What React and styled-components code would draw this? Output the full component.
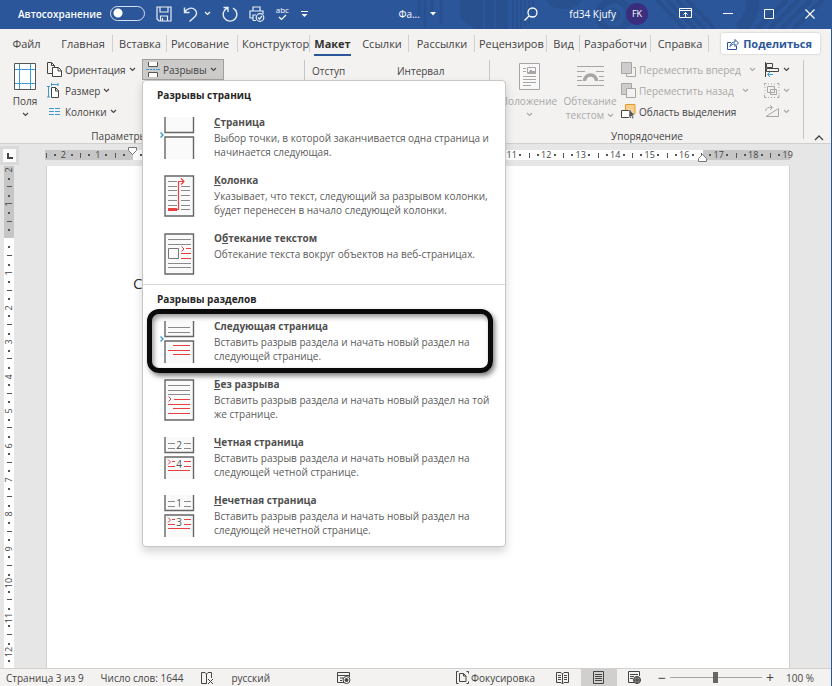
import React from "react";
import styled, { createGlobalStyle, css } from "styled-components";

const BLUE = "#2b579a";
const INK = "#444";
const FAINT = "#aaa8a6";
const RED = "#e84040";
const SKY = "#3c9bd6";

const GlobalStyle = createGlobalStyle`
  *, *::before, *::after { box-sizing: border-box; }
  html, body { margin: 0; }
  body {
    font-family: "Open Sans", "Noto Sans", sans-serif;
    font-size: 10px;
    line-height: 14px;
    color: ${INK};
    background: #e6e6e6;
  }
  button, input { font: inherit; color: inherit; }
  button { margin: 0; padding: 0; border: 0; background: none; cursor: pointer; white-space: nowrap; }
  svg { display: block; flex: none; }
`;

const Window = styled.div`
  height: 100vh;
  display: flex;
  flex-direction: column;
  border-right: 1px solid ${BLUE};
  overflow: hidden;
`;

/* ---------- title bar ---------- */
const TitleBar = styled.header`
  position: relative;
  flex: none;
  display: flex;
  align-items: center;
  justify-content: space-between;
  height: 29px;
  padding: 0 16px 2px 18px;
  background: ${BLUE};
  color: #fff;
`;
const TitlePattern = styled.svg`
  position: absolute;
  top: 0;
  right: 0;
  pointer-events: none;
`;
const TitleGroup = styled.div`
  position: relative;
  display: flex;
  align-items: center;
  gap: ${(p) => p.$gap}px;
`;
const AutoSave = styled.label`
  display: flex;
  align-items: center;
  gap: 8px;
  font-weight: 600;
`;
const Toggle = styled.input`
  appearance: none;
  width: 35px;
  height: 15px;
  margin: 0;
  border: 1px solid #d5deeb;
  border-radius: 8px;
  background: radial-gradient(circle at 7px 6px, #fff 4px, transparent 5px);
`;
const TitleButton = styled.button`
  display: flex;
  align-items: center;
  gap: ${(p) => p.$gap || 6}px;
`;
const SpellButton = styled.button`
  display: flex;
  flex-direction: column;
  align-items: center;
  font-size: 8px;
  line-height: 8px;
`;
const Avatar = styled.span`
  display: grid;
  place-items: center;
  width: 22px;
  height: 22px;
  border-radius: 50%;
  background: #3b2e7e;
  font-size: 9px;
`;

/* ---------- tabs ---------- */
const TabBar = styled.nav`
  flex: none;
  display: flex;
  align-items: center;
  height: 29px;
  padding-right: 11px;
  background: #f3f2f1;
`;
const Tab = styled.button`
  flex: 0 1 ${(p) => p.$w}px;
  min-width: 0;
  height: 17px;
  padding: 0 3px 0 4px;
  overflow: hidden;
  font-size: 11px;
  line-height: 16px;
  text-align: ${(p) => (p.$clip ? "left" : "center")};
  border-right: 1px solid ${(p) => (p.$open ? "transparent" : "#d2d0ce")};
  ${(p) =>
    p.$active &&
    css`
      height: 21px;
      margin-top: 4px;
      font-weight: 700;
      color: #333;
      border-right-color: transparent;
      span {
        display: block;
        height: 20px;
        border-bottom: 2px solid ${BLUE};
      }
    `}
`;
const ShareButton = styled.button`
  display: flex;
  align-items: center;
  gap: 4px;
  height: 21px;
  margin-left: auto;
  padding: 0 8px 0 6px;
  border-radius: 2px;
  background: #fff;
  box-shadow: 0 0 2px rgba(0, 0, 0, 0.25);
  color: ${BLUE};
  font-size: 11px;
  font-weight: 700;
`;

/* ---------- ribbon ---------- */
const Ribbon = styled.section`
  position: relative;
  z-index: 2;
  flex: none;
  display: flex;
  height: 86px;
  background: #f3f2f1;
  border-bottom: 1px solid #d2d0ce;
`;
const Group = styled.div`
  flex: ${(p) => p.$grow || 0} 0 ${(p) => p.$w}px;
  position: relative;
  display: flex;
  flex-direction: column;
  &::after {
    content: "";
    position: absolute;
    right: 0;
    top: 2px;
    bottom: 4px;
    border-right: 1px solid #c8c6c4;
  }
`;
const GroupBody = styled.div`
  flex: 1;
  min-height: 0;
  display: flex;
  align-items: flex-start;
  gap: ${(p) => p.$gap || 0}px;
  padding-left: ${(p) => p.$inset || 0}px;
`;
const GroupLabel = styled.div`
  height: 14px;
  padding-right: ${(p) => p.$inset || 0}px;
  text-align: center;
`;
const Stack = styled.div`
  flex: 0 0 ${(p) => p.$w}px;
  display: flex;
  flex-direction: column;
  align-items: flex-start;
  padding-top: 1px;
`;
const RibbonButton = styled.button`
  display: flex;
  align-items: center;
  gap: ${(p) => p.$gap || 3}px;
  height: 21px;
  color: ${(p) => (p.disabled ? FAINT : INK)};
`;
const TallButton = styled.button`
  flex: 0 0 ${(p) => p.$w}px;
  display: flex;
  flex-direction: column;
  align-items: center;
  padding: 5px 0 0 ${(p) => p.$inset || 0}px;
  color: ${(p) => (p.disabled ? FAINT : INK)};
  span { display: flex; align-items: center; gap: 3px; }
  svg + span { margin-top: 4px; }
  > span + svg { margin-top: 4px; }
`;
const FieldTitles = styled.div`
  display: grid;
  grid-template-columns: 85px 1fr;
  padding: 6px 7px;
`;
const MenuAnchor = styled.div`
  position: relative;
  z-index: 1;
  margin-top: 1px;
`;
const BreaksButton = styled(RibbonButton)`
  width: 82px;
  padding-left: 3px;
  border: 1px solid #a19f9d;
  background: #cdcbc9;
`;
const CollapseButton = styled.button`
  display: flex;
  flex: 0 0 27px;
  align-items: flex-end;
  justify-content: center;
  padding: 0 0 2px 2px;
`;

/* ---------- breaks menu ---------- */
const Menu = styled.div`
  position: absolute;
  top: 100%;
  left: 0;
  width: 364px;
  height: 467px;
  border: 1px solid #c8c6c4;
  border-radius: 4px;
  background: #fff;
  box-shadow: 0 5px 10px rgba(0, 0, 0, 0.16);
`;
const MenuHeading = styled.h2`
  margin: 0;
  padding: 7px 14px 0;
  height: 33px;
  font-size: 10px;
  line-height: 14px;
  font-weight: 700;
  color: #262626;
`;
const MenuItem = styled.button`
  position: relative;
  display: grid;
  grid-template-columns: 42px 1fr;
  gap: 19px;
  align-items: start;
  width: 100%;
  height: 58px;
  padding: 0 2px 0 10px;
  text-align: left;
  color: #5c5c5c;
  svg { margin-top: 3px; }
`;
const MenuSection = styled.div`
  & + & {
    border-top: 1px solid #dcdad8;
  }
  &:first-child ${MenuItem}:last-child { height: 54px; }
`;
const MenuText = styled.span`
  white-space: normal;
`;
const ItemTitle = styled.strong`
  display: block;
  height: 17px;
  line-height: 16px;
  color: #505050;
`;
const Highlight = styled.span`
  position: absolute;
  top: -9px;
  left: 4px;
  right: 12px;
  height: 64px;
  border: 5px solid #0a0a0a;
  border-radius: 12px;
  box-shadow: 2px 3px 5px rgba(0, 0, 0, 0.5), inset 2px 3px 5px rgba(0, 0, 0, 0.4);
`;

/* ---------- document ---------- */
const Workspace = styled.main`
  flex: 1;
  min-height: 0;
  display: grid;
  grid-template-columns: 45px 1fr 41px;
  grid-template-rows: 22px 1fr;
`;
const Corner = styled.div`
  display: grid;
  place-items: center;
  width: 19px;
  height: 19px;
  margin: 2px 0;
  background: #fbfbfb;
  border: 3px solid #dadada;
`;
const RulerX = styled.div`
  position: relative;
  display: flex;
  align-items: center;
  justify-content: space-between;
  height: 10px;
  margin-top: 6px;
  padding: 0 2px 0 1px;
  font-size: 9px;
  background: linear-gradient(90deg, #c6c6c6 11.8%, #fff 11.8% 88.3%, #c6c6c6 88.3%);
`;
const RulerY = styled.div`
  display: flex;
  flex-direction: column;
  align-items: center;
  justify-content: space-between;
  width: 10px;
  margin-left: 4px;
  padding: 4px 0 7px;
  font-size: 9px;
  background: linear-gradient(#c6c6c6 14.4%, #fff 14.4%);
`;
const Mark = styled.span`
  display: flex;
  flex: none;
  align-items: center;
  justify-content: center;
  width: 0;
  height: 0;
  transform: ${(p) => (p.$turned ? "rotate(-90deg)" : "none")};
  i {
    flex: none;
    width: ${(p) => (p.$kind === "dot" ? 2 : 1)}px;
    height: ${(p) => (p.$kind === "dot" ? 2 : 5)}px;
    background: #555;
  }
`;
const IndentMarker = styled.svg`
  position: absolute;
  left: ${(p) => p.$left};
  top: ${(p) => p.$top}px;
  margin-left: -5px;
`;
const Page = styled.article`
  margin-left: 1px;
  padding: 107px 86px;
  border: solid #d0d0d0;
  border-width: 0 1px;
  background: #fff;
  font-size: 15px;
  line-height: 20px;
  color: #333;
  p { margin: 0; }
`;

/* ---------- status bar ---------- */
const StatusBar = styled.footer`
  flex: none;
  display: flex;
  align-items: stretch;
  justify-content: space-between;
  height: 18px;
  padding: 0 17px 0 6px;
  background: #f3f2f1;
  border-top: 1px solid #d2d0ce;
`;
const StatusGroup = styled.div`
  display: flex;
  align-items: center;
  gap: ${(p) => p.$gap}px;
`;
const MacroButton = styled.button`
  margin-left: 50px;
`;
const ViewButton = styled.button`
  display: grid;
  place-items: center;
  width: 36px;
  height: 17px;
  background: ${(p) => (p.$on ? "#d0cfcd" : "none")};
`;
const FocusButton = styled.button`
  display: flex;
  align-items: center;
  gap: 2px;
  margin-right: 10px;
`;
const ZoomGroup = styled.div`
  display: flex;
  align-items: center;
  gap: 4px;
  margin-left: 5px;
`;
const ZoomButton = styled.button`
  width: 8px;
  font-size: 14px;
`;
const ZoomSlider = styled.input`
  appearance: none;
  width: 92px;
  height: 12px;
  margin: 0;
  background: linear-gradient(#a8a6a4, #a8a6a4) center / 100% 1px no-repeat;
  &::-webkit-slider-thumb {
    appearance: none;
    width: 5px;
    height: 11px;
    background: #666;
  }
`;
const ZoomValue = styled.span`
  margin-left: 8px;
  white-space: nowrap;
`;

/* ---------- icons ---------- */
const Icon = ({ w = 16, h = 16, c = "currentColor", sw = 1, children }) => (
  <svg width={w} height={h} viewBox={`0 0 ${w} ${h}`} fill="none" stroke={c} strokeWidth={sw} aria-hidden="true">
    {children}
  </svg>
);
const Chevron = () => (
  <Icon w={7} h={5} sw={1.1}><path d="M1 1l2.500 2.500L6 1" /></Icon>
);

const SaveIcon = () => (
  <Icon w={16} h={16} c="#e6edf6" sw={1.2}>
    <path d="M1 1h14v14H3l-2-2zM4 1v5h8V1M4.500 15v-5h7v5M6.500 15v-3" />
  </Icon>
);
const UndoIcon = () => (
  <Icon w={15} h={16} sw={1.4} c="#e6edf6">
    <path d="M1.500 1.500v5h5M1.500 6.500C4 2 9 .8 12 3.800s1 6-1 7.700L6.500 15.500" />
  </Icon>
);
const RedoIcon = () => (
  <Icon w={16} h={16} sw={1.4} c="#e6edf6">
    <path d="M1.500 1.500h4.500v4.500M5.500 2A6.800 6.800 0 1 0 11 2.200" />
  </Icon>
);
const PrintIcon = () => (
  <Icon w={16} h={16} sw={1.2} c="#e6edf6">
    <path d="M4 5V1h7v4M4 12H1V5h13v3M4 14.500V9h3M4 14.500h3" />
    <circle cx="11" cy="11.500" r="3.800" />
    <path d="M9 11.500l1.500 1.500 2.500-3" />
  </Icon>
);
const PatternArt = () => (
  <TitlePattern width="420" height="29" viewBox="0 0 420 29" fill="none" stroke="#28508e" aria-hidden="true">
    <path d="M8 0v17M14 0v27M21 0v17M30 0v24" strokeWidth="3" />
    <path d="M49 0h23v29h-8l-15-11zM74 0h9v29h-9zM85 0h12v29H85z" fill="#28508e" stroke="none" />
    <path d="M102 0v29M106 0v29M110 0v29M114 0v27M118 0v24M122 0v18" strokeWidth="2" />
    <path d="M136 0c2 12 32 12 34 0z" fill="#28508e" stroke="none" />
    <circle cx="203" cy="15" r="15" strokeWidth="7" />
    <circle cx="203" cy="15" r="5" strokeWidth="3" />
    <path d="M246 0l28 29M256 0l28 29M266 0l28 29M276 0l28 29" strokeWidth="4" />
    <path d="M342 0c0 14-6 23-14 29" strokeWidth="13" />
    <path d="M346 29l30-29M358 29l30-29M370 29l30-29M382 29l30-29" strokeWidth="5" />
  </TitlePattern>
);
const MarginsIcon = () => (
  <Icon w={22} h={27}>
    <path d="M.5.500h21v26H.5z" fill="#fff" stroke="#555" />
    <path d="M5.500 1v25M16.500 1v25M1 6.500h20M1 20.500h20" stroke={SKY} />
  </Icon>
);
const OrientationIcon = () => (
  <Icon w={15} h={15}>
    <path d="M5 11.500H.5v-11h4l3 3V6M4.500.500v3h3" />
    <path d="M5.500 5.500h6l3 3v6h-9zM11 5.500v3.500h3.500" fill="#fff" />
  </Icon>
);
const SizeIcon = () => (
  <Icon w={15} h={15}>
    <path d="M1.500 3v11M0 3.500h3M0 14h3M4 1.500h7M4.500 0v3M11 0v3" stroke={SKY} />
    <path d="M4.500 4.500h4l3 3v7h-7zM8.500 4.500v3.500h3" fill="#fff" />
  </Icon>
);
const ColumnsIcon = () => (
  <Icon w={15} h={12} c={SKY}>
    <path d="M2 2.500h5M2 5.500h5M2 8.500h5M8 2.500h5M8 5.500h5M8 8.500h5" />
  </Icon>
);
const BreaksIcon = () => (
  <Icon w={14} h={15}>
    <path d="M2.500 0v4.500h9V0M2.500 15v-4.500h9V15" fill="#fff" stroke="#555" />
    <path d="M0 7.500h3M4 7.500h2M7 7.500h2M10 7.500h4" stroke={SKY} />
  </Icon>
);
const PositionIcon = () => (
  <Icon w={21} h={27} c="#a8a6a4">
    <path d="M.5.500h20v26H.5z" fill="#f8f8f8" />
    <path d="M8.500 4.500h8v6h-8zM4 5.500h3M4 8.500h3M4 13.500h13M4 16.500h13M4 19.500h13M4 22.500h8" />
    <path d="M9 10l3-3 2 2 1-1 2 2z" fill="#a8a6a4" />
  </Icon>
);
const WrapIcon = () => (
  <Icon w={27} h={27} c="#a8a6a4">
    <path d="M0 3.500h27M0 8.500h8M19 8.500h8M0 13.500h5M22 13.500h5M0 17.500h5M22 17.500h5M0 22.500h27" />
    <path d="M7.500 18a6 6 0 0 1 12 0" strokeWidth="3.500" />
  </Icon>
);
const ForwardIcon = () => (
  <Icon w={15} h={15} c="#a8a6a4">
    <path d="M5.500 12v2.500h9v-9H12" />
    <path d="M.5.500h10v11H.5z" fill="#cfcdcb" />
  </Icon>
);
const BackIcon = () => (
  <Icon w={15} h={15} c="#a8a6a4">
    <path d="M.5.500h10v11H.5z" fill="#cfcdcb" />
    <path d="M5.500 5.500h9v9h-9z" fill="#f3f2f1" />
  </Icon>
);
const SelectionIcon = () => (
  <Icon w={15} h={15}>
    <path d="M4.500.500h9.500v9H4.500z" fill="#f8cf8c" stroke="#e59a2f" />
    <path d="M.5 6.500h9v7h-9z" fill="#fff" stroke="#444" />
    <path d="M8 5v9l2.200-2 1.300 3 1.500-.7-1.300-2.800H14z" fill="#555" stroke="#fff" strokeWidth=".5" />
  </Icon>
);
const AlignIcon = () => (
  <Icon w={16} h={15}>
    <path d="M1.500 0v15M2.500 1.500h6v4h-6zM2.500 6.500h12v3h-12z" />
    <path d="M9 12.500H3.500M6 10l-2.500 2.500L6 15" stroke={SKY} />
  </Icon>
);
const GroupIcon = () => (
  <Icon w={16} h={15} c="#a8a6a4">
    <path d="M3.500 3.500h7v6h-7zM6.500 6.500h6v5h-6zM.5 2.500v-2h2M13 .500h2v2M.5 12v2.500h2M13 14.500h2V12" />
    <path d="M1 4v7M15 4v7M4 1h8M4 14.500h8" strokeDasharray="1 2" />
  </Icon>
);
const RotateIcon = () => (
  <Icon w={16} h={15} c="#a8a6a4">
    <path d="M2 12.500h12.500V4.500zM1.500 7C2 4 4 3 8 3.500M6 1l2.500 2.500L6 6" />
  </Icon>
);
const ProofIcon = () => (
  <Icon w={14} h={13}>
    <path d="M7 12.500H1.500v-11H5L6.500 3 8 1.500h3.500V7M6.500 3v9M8 8l5 5M13 8l-5 5" />
  </Icon>
);
const MacroIcon = () => (
  <Icon w={14} h={13}>
    <path d="M7 11.500H.5v-10h12V6M.5 4.500h12M3 7h3M3 9.500h2" />
    <circle cx="9.500" cy="9" r="3.500" /><circle cx="9.500" cy="9" r="1.500" fill="currentColor" />
  </Icon>
);
const FocusIcon = () => (
  <Icon w={13} h={13}>
    <path d="M2.500 .500H.5v12h2M10.500 12.500h2v-2M10.500.500h2v2" />
    <path d="M3.500 2.500h4l2.500 2.500v5.500H3.500zM7.500 2.500V5H10" />
  </Icon>
);
const ReadIcon = () => (
  <Icon w={13} h={12}>
    <path d="M6.500 2L5 .500H.5v10H5L6.500 12 8 10.500h4.500V.500H8L6.500 2zv9.500M2 3.500h3M2 5.500h3M2 7.500h3M8 3.500h3M8 5.500h3M8 7.500h3" />
  </Icon>
);
const PrintLayoutIcon = () => (
  <Icon w={11} h={13}>
    <path d="M.5.500h10v12H.5zM2 3.500h7M2 5.500h7M2 7.500h7M2 9.500h7" />
  </Icon>
);
const WebIcon = () => (
  <Icon w={13} h={13}>
    <path d="M6 11.500H.5V.500h11V5M2 3.500h8M2 5.500h4M2 7.500h3" />
    <circle cx="9" cy="9" r="3.500" fill="#8a8886" /><path d="M5.500 9h7M9 5.500v7" />
  </Icon>
);

/* Thumbnails of the breaks: a 42x42 drawing with the sheet 12px from the left. */
const Sheet = () => <path d="M12 1h28.500v40H12z" fill="#fafafa" stroke="#666" strokeWidth="1.400" />;
const SplitSheet = ({ arrow }) => (
  <>
    <path d="M12 0v15.500h28.500V0M12 42V20h28.500v22" fill="#fafafa" stroke="#666" strokeWidth="1.400" />
    {arrow && <path d="M7.500 15.500l2.500 2.500-2.500 2.500" stroke={SKY} strokeWidth="1.400" />}
  </>
);
const ART = {
  page: <SplitSheet arrow />,
  column: (
    <>
      <Sheet />
      <path d="M15 6.500h9M15 11.500h9M15 15.500h9M15 20.500h9M15 25.500h9M15 30.500h9M28 11.500h9M28 15.500h9M28 20.500h9M28 25.500h9M28 30.500h9M28 34.500h9" stroke="#8a8a8a" />
      <path d="M15 34.500h9" stroke={RED} strokeWidth="3" />
      <path d="M24 34.500h1.500v-28H30M28 3.500l3 3-3 3" stroke={RED} strokeWidth="1.200" />
    </>
  ),
  wrap: (
    <>
      <Sheet />
      <path d="M15 6.500h23M15 11.500h23M15 30.500h23M15 34.500h23" stroke="#8a8a8a" />
      <path d="M15.500 15.500h10v10h-10z" stroke="#777" />
      <path d="M28.500 13.500l2.500 2.500-2.500 2.500M33 15.500h5M28 20.500h10M28 25.500h10" stroke={RED} />
    </>
  ),
  next: (
    <>
      <SplitSheet arrow />
      <path d="M15 6.500h22M15 11.500h22" stroke="#8a8a8a" />
      <path d="M20 24.500h17M15 29.500h22M20 33.500h17" stroke={RED} />
    </>
  ),
  continuous: (
    <>
      <Sheet />
      <path d="M15 6.500h22M15 11.500h22M15 15.500h22" stroke="#8a8a8a" />
      <path d="M15.500 17.500l2.500 2.500-2.500 2.500M21 20.500h16M15 25.500h22M20 29.500h17M15 34.500h22" stroke={RED} />
    </>
  ),
};
const NumberedArt = ({ top, bottom }) => (
  <>
    <SplitSheet />
    <path d="M15 6.500h7M15 11.500h7M31 6.500h7M31 11.500h7" stroke="#8a8a8a" />
    <path d="M15 22.500l2.500 2.500-2.500 2.500M19 24.500h3M15 29.500h7M31 24.500h7M31 29.500h7M15 33.500h22" stroke={RED} />
    <g fill="#555" stroke="none" fontSize="10" textAnchor="middle">
      <text x="26" y="12">{top}</text>
      <text x="26" y="31">{bottom}</text>
    </g>
  </>
);

const MENU = [
  {
    heading: "Разрывы страниц",
    items: [
      { key: "С", rest: "траница", text: "Выбор точки, в которой заканчивается одна страница и начинается следующая.", art: ART.page },
      { key: "К", rest: "олонка", text: "Указывает, что текст, следующий за разрывом колонки, будет перенесен в начало следующей колонки.", art: ART.column },
      { pre: "О", key: "б", rest: "текание текстом", text: "Обтекание текста вокруг объектов на веб-страницах.", art: ART.wrap },
    ],
  },
  {
    heading: "Разрывы разделов",
    items: [
      { pre: "Сле", key: "д", rest: "ующая страница", text: "Вставить разрыв раздела и начать новый раздел на следующей странице.", art: ART.next, marked: true },
      { key: "Б", rest: "ез разрыва", text: "Вставить разрыв раздела и начать новый раздел на той же странице.", art: ART.continuous },
      { key: "Ч", rest: "етная страница", text: "Вставить разрыв раздела и начать новый раздел на следующей четной странице.", art: <NumberedArt top="2" bottom="4" /> },
      { key: "Н", rest: "ечетная страница", text: "Вставить разрыв раздела и начать новый раздел на следующей нечетной странице.", art: <NumberedArt top="1" bottom="3" /> },
    ],
  },
];

const TABS = [
  { label: "Файл", w: 53, open: true },
  { label: "Главная", w: 60 },
  { label: "Вставка", w: 54 },
  { label: "Рисование", w: 71, clip: true },
  { label: "Конструктор", w: 72, clip: true },
  { label: "Макет", w: 45, active: true },
  { label: "Ссылки", w: 54 },
  { label: "Рассылки", w: 66 },
  { label: "Рецензиров", w: 72, clip: true },
  { label: "Вид", w: 33 },
  { label: "Разработчи", w: 71, clip: true },
  { label: "Справка", w: 58 },
];

/* Ruler marks, one for each quarter of a centimetre. */
const rulerMarks = (from, to) => {
  const marks = [];
  for (let q = from; q <= to; q += 1) {
    if (q === 0) marks.push({ q, kind: "none" });
    else if (q % 4 === 0) marks.push({ q, kind: "number", value: Math.abs(q / 4) });
    else marks.push({ q, kind: q % 2 === 0 ? "tick" : "dot" });
  }
  return marks;
};
const Marks = ({ from, to, turned }) =>
  rulerMarks(from, to).map((m) => (
    <Mark key={m.q} $kind={m.kind} $turned={turned}>
      {m.kind === "number" ? m.value : m.kind === "none" ? null : <i />}
    </Mark>
  ));

const BreaksMenu = () => (
  <Menu role="menu" aria-label="Разрывы">
    {MENU.map((section) => (
      <MenuSection key={section.heading}>
        <MenuHeading>{section.heading}</MenuHeading>
        {section.items.map((item) => (
          <MenuItem key={item.key + item.rest} role="menuitem">
            <Icon w={42} h={42}>{item.art}</Icon>
            <MenuText>
              <ItemTitle>{item.pre}<u>{item.key}</u>{item.rest}</ItemTitle>
              {item.text}
            </MenuText>
            {item.marked && <Highlight />}
          </MenuItem>
        ))}
      </MenuSection>
    ))}
  </Menu>
);

export default function App() {
  return (
    <Window>
      <GlobalStyle />
      <TitleBar>
        <PatternArt />
        <TitleGroup $gap={11}>
          <AutoSave>Автосохранение<Toggle type="checkbox" role="switch" /></AutoSave>
          <TitleButton aria-label="Сохранить"><SaveIcon /></TitleButton>
          <TitleButton aria-label="Отменить"><UndoIcon /><Chevron /></TitleButton>
          <TitleButton aria-label="Повторить"><RedoIcon /></TitleButton>
          <TitleButton aria-label="Печать"><PrintIcon /></TitleButton>
          <SpellButton aria-label="Правописание">
            abc
            <Icon w={9} h={7} sw={1.2}><path d="M1 3l2.500 2.500L8 1" /></Icon>
          </SpellButton>
          <TitleButton aria-label="Настройка панели">
            <Icon w={10} h={8}><path d="M1 1.500h7" /><path d="M1.500 4h6l-3 3z" fill="#fff" stroke="none" /></Icon>
          </TitleButton>
        </TitleGroup>
        <TitleGroup $gap={10}>
          <span>Фа...</span>
          <Icon w={6} h={4}><path d="M0 0h6L3 3.500z" fill="#fff" stroke="none" /></Icon>
        </TitleGroup>
        <TitleGroup $gap={31}>
          <TitleButton aria-label="Поиск">
            <Icon w={14} h={14} sw={1.300}><circle cx="8.500" cy="5.500" r="4.500" /><path d="M5 9l-4.500 4.500" /></Icon>
          </TitleButton>
          <TitleButton $gap={10}>fd34 Kjufy<Avatar>FK</Avatar></TitleButton>
          <TitleButton aria-label="Параметры ленты">
            <Icon w={13} h={11}><path d="M.5.500h12v9H.5zM.5 2.500h12M6.500 9V4.500M4.500 6.500l2-2 2 2" /></Icon>
          </TitleButton>
          <TitleButton aria-label="Свернуть"><Icon w={10} h={10}><path d="M0 4.500h10" /></Icon></TitleButton>
          <TitleButton aria-label="Развернуть"><Icon w={10} h={10}><path d="M.5.500h9v9h-9z" /></Icon></TitleButton>
          <TitleButton aria-label="Закрыть"><Icon w={10} h={10} sw={1.200}><path d="M.5.500l9 9M9.500.500l-9 9" /></Icon></TitleButton>
        </TitleGroup>
      </TitleBar>

      <TabBar>
        {TABS.map((t) => (
          <Tab key={t.label} $w={t.w} $clip={t.clip} $open={t.open} $active={t.active}>
            <span>{t.label}</span>
          </Tab>
        ))}
        <ShareButton>
          <Icon w={12} h={12}><path d="M4 4.500H.5v7h9V8M3 8.500c.5-3 2.500-4.500 5-4.500V1.500L11.500 5 8 8.500V6C6 6 4.500 6.500 3 8.500z" /></Icon>
          Поделиться
        </ShareButton>
      </TabBar>

      <Ribbon>
        <Group $w={305}>
          <GroupBody>
            <TallButton $w={47} $inset={3}><MarginsIcon /><span>Поля</span><Chevron /></TallButton>
            <Stack $w={95}>
              <RibbonButton><OrientationIcon />Ориентация <Chevron /></RibbonButton>
              <RibbonButton><SizeIcon />Размер <Chevron /></RibbonButton>
              <RibbonButton><ColumnsIcon />Колонки <Chevron /></RibbonButton>
            </Stack>
            <MenuAnchor>
              <BreaksButton aria-haspopup="menu" aria-expanded="true"><BreaksIcon />Разрывы <Chevron /></BreaksButton>
              <BreaksMenu />
            </MenuAnchor>
          </GroupBody>
          <GroupLabel $inset={16}>Параметры страницы</GroupLabel>
        </Group>
        <Group $w={185} $grow={1}>
          <FieldTitles><span>Отступ</span><span>Интервал</span></FieldTitles>
        </Group>
        <Group $w={314}>
          <GroupBody $inset={9} $gap={2}>
            <TallButton $w={60} disabled><PositionIcon /><span>Положение</span><Chevron /></TallButton>
            <TallButton $w={58} disabled><WrapIcon /><span>Обтекание</span><span>текстом <Chevron /></span></TallButton>
            <Stack $w={141}>
              <RibbonButton $gap={8} disabled><RibbonButton as="span" disabled><ForwardIcon />Переместить вперед</RibbonButton><Chevron /></RibbonButton>
              <RibbonButton $gap={8} disabled><RibbonButton as="span" disabled><BackIcon />Переместить назад</RibbonButton><Chevron /></RibbonButton>
              <RibbonButton><SelectionIcon />Область выделения</RibbonButton>
            </Stack>
            <Stack $w={30}>
              <RibbonButton aria-label="Выровнять"><AlignIcon /><Chevron /></RibbonButton>
              <RibbonButton aria-label="Группировать" disabled><GroupIcon /><Chevron /></RibbonButton>
              <RibbonButton aria-label="Повернуть" disabled><RotateIcon /><Chevron /></RibbonButton>
            </Stack>
          </GroupBody>
          <GroupLabel>Упорядочение</GroupLabel>
        </Group>
        <CollapseButton aria-label="Свернуть ленту">
          <Icon w={10} h={6} sw={1.300}><path d="M1 5l4-4 4 4" /></Icon>
        </CollapseButton>
      </Ribbon>

      <Workspace>
        <Corner><Icon w={6} h={6} sw={2}><path d="M1 0v5h5" /></Icon></Corner>
        <RulerX>
          <Marks from={-10} to={76} />
          <IndentMarker $left="11.8%" $top={-3} width="9" height="8" fill="#fff" stroke="#777"><path d="M.5.500h8v3l-4 4-4-4z" /></IndentMarker>
          <IndentMarker $left="88.3%" $top={4} width="9" height="8" fill="#fff" stroke="#777"><path d="M.5 7.500h8v-3l-4-4-4 4z" /></IndentMarker>
        </RulerX>
        <span />
        <RulerY><Marks from={-8} to={49} turned /></RulerY>
        <Page><p>С</p></Page>
      </Workspace>

      <StatusBar>
        <StatusGroup $gap={17}>
          <span>Страница 3 из 9</span>
          <span>Число слов: 1644</span>
          <ProofIcon />
          <span>русский</span>
          <MacroButton aria-label="Запись макроса"><MacroIcon /></MacroButton>
        </StatusGroup>
        <StatusGroup $gap={0}>
          <FocusButton><FocusIcon />Фокусировка</FocusButton>
          <ViewButton aria-label="Режим чтения"><ReadIcon /></ViewButton>
          <ViewButton aria-label="Разметка страницы" $on><PrintLayoutIcon /></ViewButton>
          <ViewButton aria-label="Веб-документ"><WebIcon /></ViewButton>
          <ZoomGroup>
            <ZoomButton aria-label="Уменьшить">−</ZoomButton>
            <ZoomSlider type="range" min="0" max="200" defaultValue="100" aria-label="Масштаб" />
            <ZoomButton aria-label="Увеличить">+</ZoomButton>
            <ZoomValue>100 %</ZoomValue>
          </ZoomGroup>
        </StatusGroup>
      </StatusBar>
    </Window>
  );
}
